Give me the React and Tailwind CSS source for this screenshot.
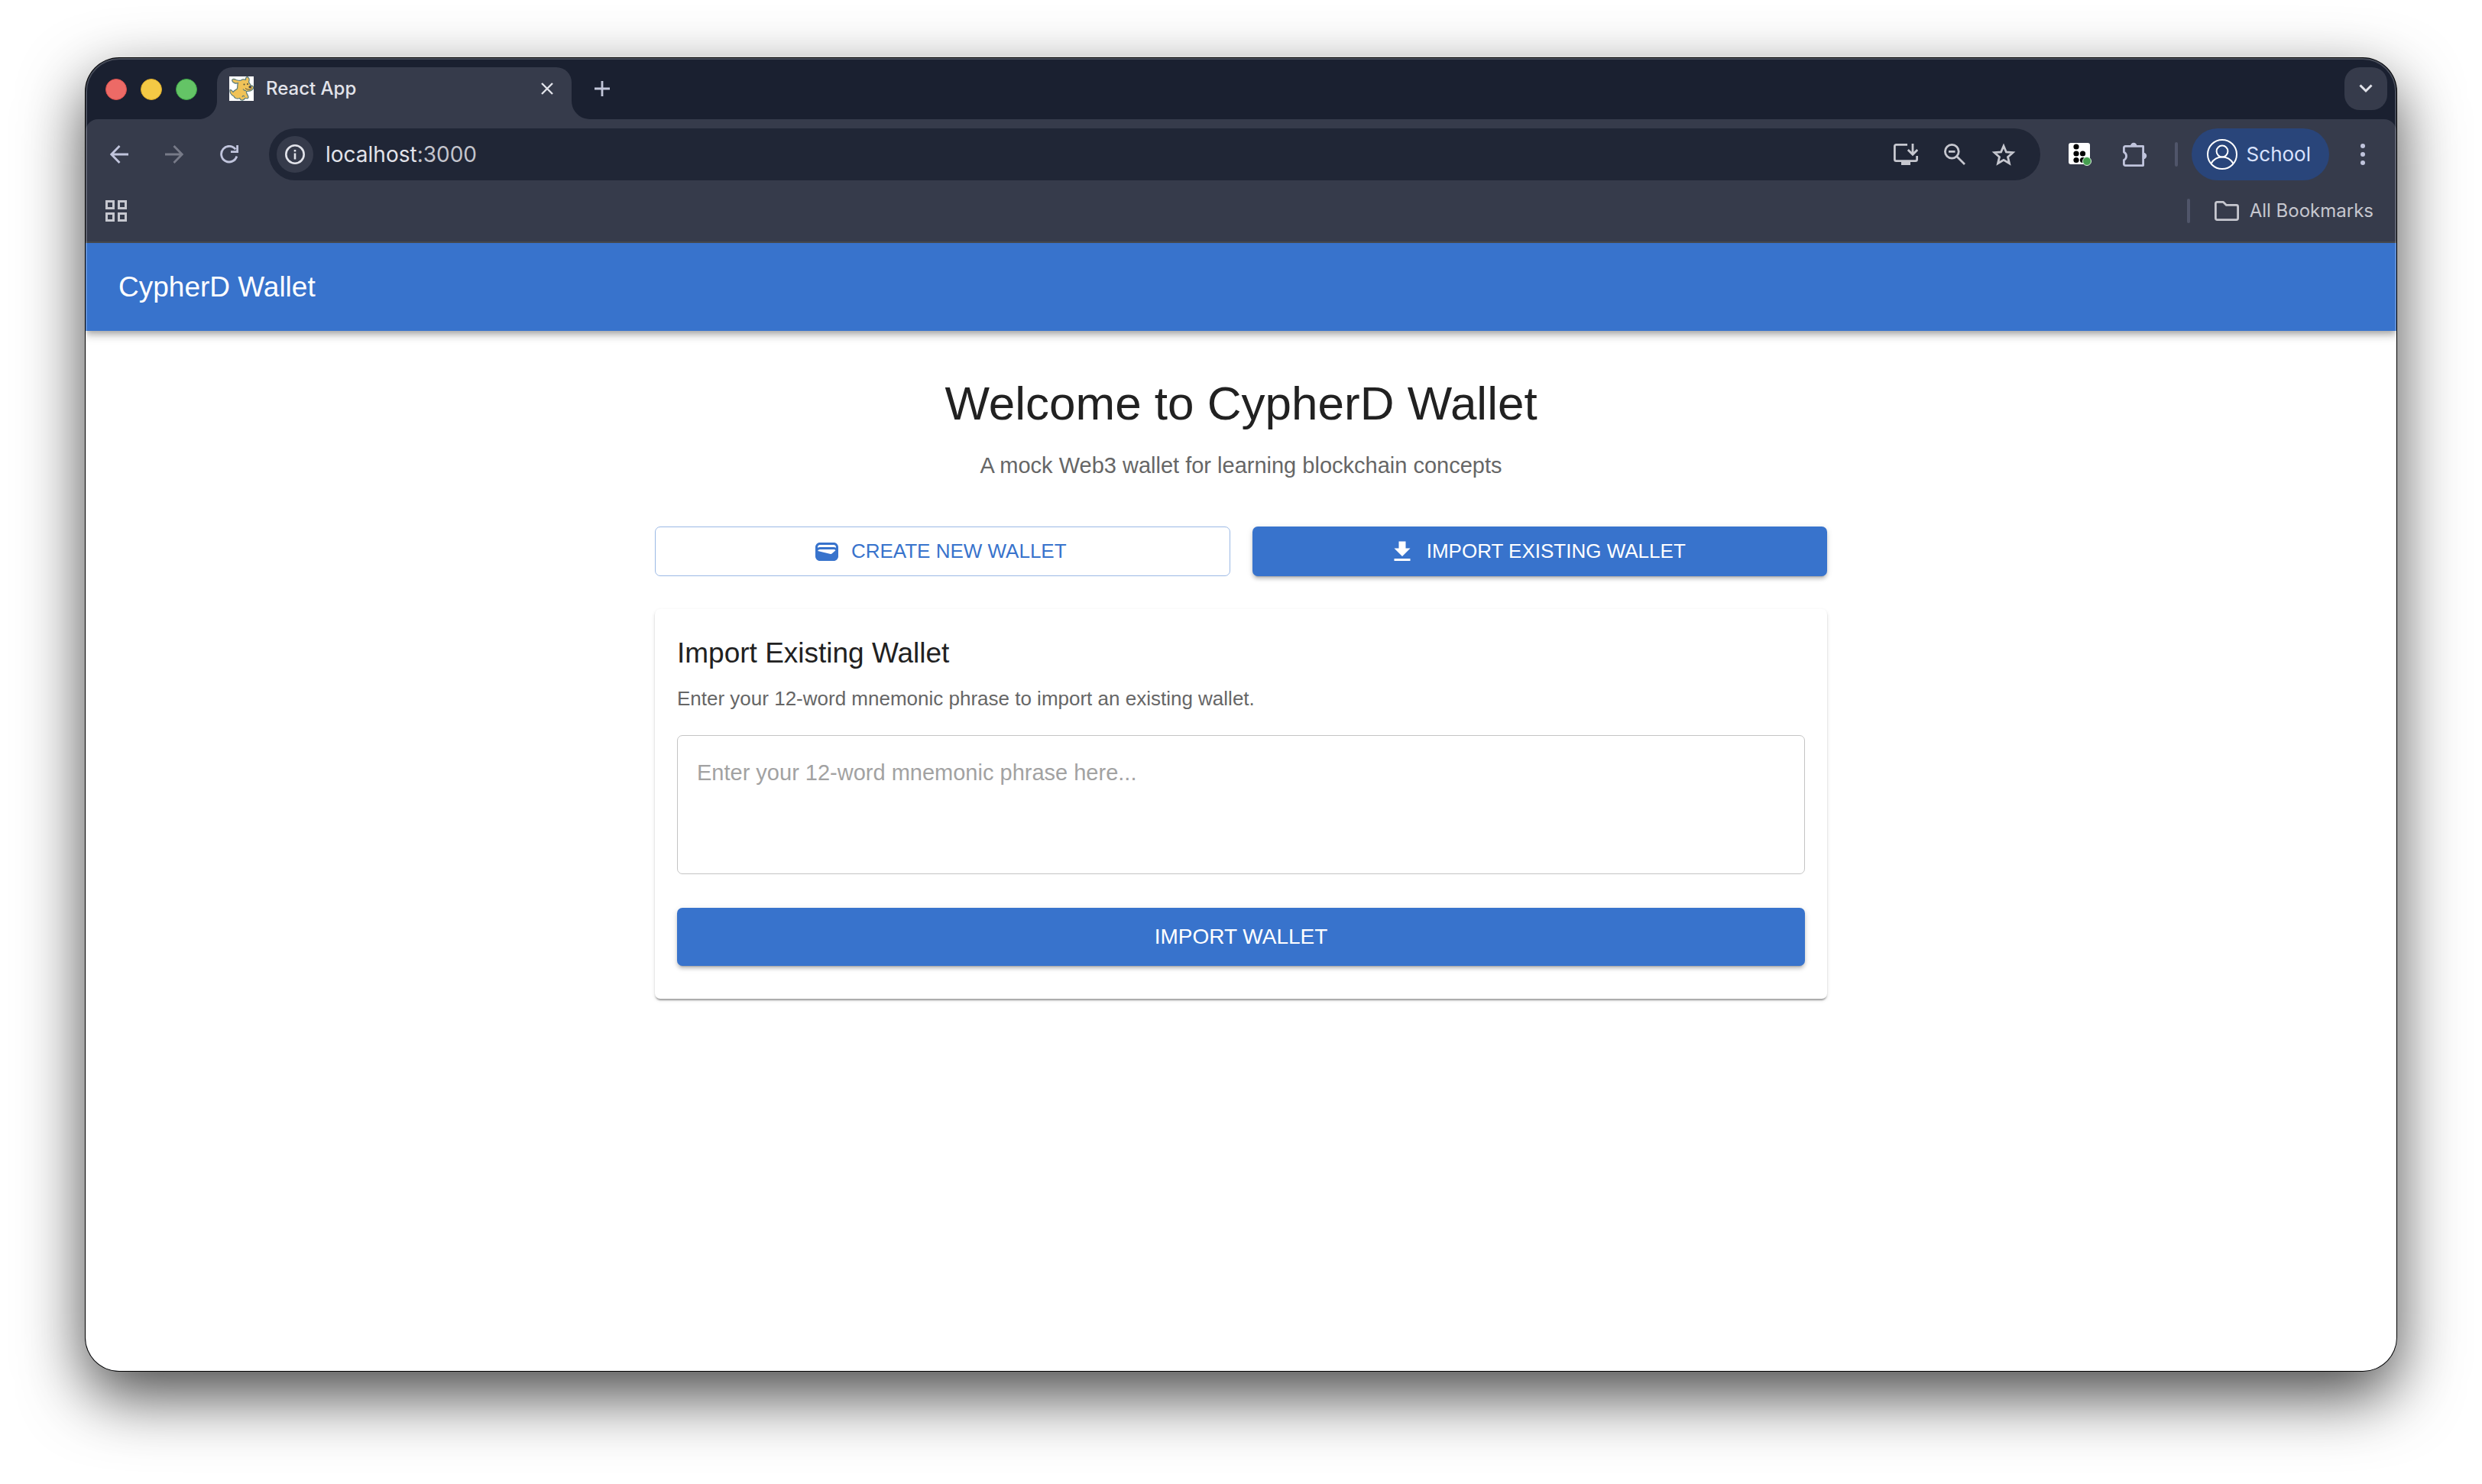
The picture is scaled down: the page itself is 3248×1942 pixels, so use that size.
import React from "react";

const iconButton = "flex size-12 shrink-0 items-center justify-center rounded-full";

function TrafficLights() {
  return (
    <div className="flex h-[58px] items-center gap-[18px]">
      <button aria-label="Close" className="size-7 rounded-full border border-[#d8504d] bg-[#ed6a66]" />
      <button aria-label="Minimize" className="size-7 rounded-full border border-[#d9a92a] bg-[#f4c945]" />
      <button aria-label="Zoom" className="size-7 rounded-full border border-[#3fa648] bg-[#64c466]" />
    </div>
  );
}

function Favicon() {
  return (
    <svg viewBox="0 0 32 32" className="size-8 shrink-0" aria-hidden="true">
      <rect width="32" height="32" fill="#fff" />
      <path
        d="M4 6C3 3 6 3 9 4.500C12 5.500 14 6 15.500 5C18 3 20 4 21.500 4.500C21 1 23.500 0 25 1.500C27 3.500 26 6 25.500 7.500C27 9 27.500 11 28.500 12C32 12 32.500 15.500 30 17.500C27.500 20 24 19 22.500 19.500C22 22 23.500 23 24.500 25.500C26 28.500 23.500 29.500 21.500 28.500C20.500 28 20 30.500 17.500 31C14 31.500 14.500 29 13.500 28.500C10 30 7 28.500 6 26C2.500 24.500 .5 21 1.200 17.500C2.500 17 3.500 19 5 20.500C6 18.500 9 17.500 10.500 16C11 13 10.500 10.500 11.500 8.500C9 9.500 5 9 4 6Z"
        fill="#f0c358"
        stroke="#5f7f7c"
        strokeWidth="1.300"
        strokeLinejoin="round"
      />
      <path d="M22 18.500C20 19 18.500 17.500 18 16.500M17 27C17.500 25 19 25 20 26.500" fill="none" stroke="#5f7f7c" strokeWidth="1.200" />
      <circle cx="19.500" cy="10.500" r="1" fill="#4a4a3a" />
      <circle cx="24" cy="10" r="1" fill="#4a4a3a" />
      <ellipse cx="27.300" cy="13.800" rx="1.900" ry="1.500" fill="#3c3f48" />
      <path d="M21 15.500C24 18 27.500 17.500 29.500 15.500" fill="none" stroke="#55503c" strokeWidth="1" />
    </svg>
  );
}

function Flare({ className }) {
  return (
    <svg viewBox="0 0 24 24" className={className} aria-hidden="true">
      <path d="M24 0V24H0C13.300 24 24 13.300 24 0Z" fill="#363b4b" />
    </svg>
  );
}

function TabStrip() {
  return (
    <div className="flex h-20 items-start gap-[26px] bg-[#1a2030] pt-3 pr-3 pl-[26px]">
      <TrafficLights />
      <div className="relative flex h-[68px] w-[464px] items-start rounded-t-[20px] bg-[#363b4b] px-4 pt-3">
        <Flare className="absolute bottom-0 -left-6 size-6" />
        <Flare className="absolute -right-6 bottom-0 size-6 -scale-x-100" />
        <Favicon />
        <span className="ml-4 flex-1 text-[24px] leading-8 font-medium text-[#e2e3ea]">React App</span>
        <button aria-label="Close tab" className="flex size-8 items-center justify-center">
          <svg viewBox="0 0 16 16" className="size-4" fill="none" stroke="#e2e3ea" strokeWidth="2.400">
            <path d="M1 1L15 15M15 1L1 15" />
          </svg>
        </button>
      </div>
      <button aria-label="New tab" className="-ml-[6px] flex h-14 w-10 items-center justify-center">
        <svg viewBox="0 0 20 20" className="size-5" fill="none" stroke="#c3c7da" strokeWidth="2.800">
          <path d="M10 0V20M0 10H20" />
        </svg>
      </button>
      <button aria-label="Search tabs" className="ml-auto flex size-14 items-center justify-center rounded-[20px] bg-[#363b4b]">
        <svg viewBox="0 0 18 12" className="h-3 w-[18px]" fill="none" stroke="#e2e3ea" strokeWidth="3">
          <path d="M1.500 1.500L9 9L16.500 1.500" />
        </svg>
      </button>
    </div>
  );
}

function Toolbar() {
  return (
    <div className="flex h-[92px] items-center gap-6 pr-5 pl-5">
      <button aria-label="Back" className={iconButton}>
        <svg viewBox="0 0 24 24" className="size-6" fill="none" stroke="#c0c4dc" strokeWidth="2.800">
          <path d="M24 12H2M12.500 1L1.800 12L12.500 23" />
        </svg>
      </button>
      <button aria-label="Forward" className={iconButton}>
        <svg viewBox="0 0 24 24" className="size-6" fill="none" stroke="#777a88" strokeWidth="2.800">
          <path d="M0 12H22M11.500 1L22.200 12L11.500 23" />
        </svg>
      </button>
      <button aria-label="Reload" className={iconButton}>
        <svg viewBox="0 0 24 24" className="size-6" fill="none" stroke="#c0c4dc" strokeWidth="2.800">
          <path d="M21.800 14.500A10.300 10.300 0 1 1 20.200 5.500M22.600 0V8.600H14" />
        </svg>
      </button>
      <div className="ml-1 flex h-[68px] flex-1 items-center gap-4 rounded-full bg-[#202636] pr-6 pl-[10px]">
        <button aria-label="Site information" className="flex size-12 items-center justify-center rounded-full bg-[#363b4b]">
          <svg viewBox="0 0 26 26" className="size-[26px]" fill="none" stroke="#e2e3ea" strokeWidth="2.600">
            <circle cx="13" cy="13" r="11.700" />
            <path d="M13 11.500V19.500M13 7V9.600" />
          </svg>
        </button>
        <div className="flex-1 text-[28px] leading-9">
          <span className="text-[#e2e3ea]">localhost</span>
          <span className="text-[#c3c4cc]">:3000</span>
        </div>
        <button aria-label="Install app" className={iconButton}>
          <svg viewBox="0 0 32 28" className="h-7 w-8" fill="none" stroke="#c6c7cf" strokeWidth="2.800">
            <path d="M18 1.400H3.500Q1.400 1.400 1.400 3.500V20.500Q1.400 22.600 3.500 22.600H28.500Q30.600 22.600 30.600 20.500V16" />
            <path d="M25 0V13M18.800 8L25 14.200L31.200 8" />
            <path d="M10 24H22V28H10Z" fill="#c6c7cf" stroke="none" />
          </svg>
        </button>
        <button aria-label="Zoom out" className={iconButton}>
          <svg viewBox="0 0 28 28" className="size-7" fill="none" stroke="#c6c7cf" strokeWidth="2.800">
            <circle cx="10.300" cy="10.300" r="8.900" />
            <path d="M16.500 16.500L27 27M6 10.300H14.500" />
          </svg>
        </button>
        <button aria-label="Bookmark this tab" className={iconButton}>
          <svg viewBox="0 0 32 30" className="h-[30px] w-8" fill="none" stroke="#c6c7cf" strokeWidth="2.800">
            <path d="M16 4L19.400 12L28 12.700L21.500 18.400L23.500 26.800L16 22.300L8.500 26.800L10.500 18.400L4 12.700L12.600 12Z" />
          </svg>
        </button>
      </div>
      <button aria-label="Extension" className={`${iconButton} ml-1`}>
        <svg viewBox="0 0 30 30" className="size-[30px]">
          <rect width="28" height="28" rx="3" fill="#fff" />
          <circle cx="10" cy="5" r="3.600" />
          <circle cx="10" cy="14" r="3.600" />
          <circle cx="18.500" cy="14" r="3.600" />
          <circle cx="10" cy="22.500" r="3.600" />
          <circle cx="18.500" cy="22.500" r="3.600" />
          <circle cx="24" cy="24" r="5.500" fill="#459f4f" stroke="#d7f0da" strokeWidth="1" />
        </svg>
      </button>
      <button aria-label="Extensions" className={iconButton}>
        <svg viewBox="0 0 32 32" className="size-8">
          <path
            d="M3.400 5.400H26.600V30.600H3.400Q1.400 30.600 1.400 28.600V23.500A6 6 0 0 0 1.400 12.900V7.400Q1.400 5.400 3.400 5.400Z"
            fill="none"
            stroke="#c0c4dc"
            strokeWidth="2.800"
            strokeLinejoin="round"
          />
          <path d="M10 5A4.200 4.200 0 0 1 18.400 5ZM27 13.800A4.200 4.200 0 0 1 27 22.200Z" fill="#c0c4dc" />
        </svg>
      </button>
      <div className="ml-1 h-8 w-1 rounded-full bg-[#50556a]" />
      <button className="-ml-[6px] flex h-[68px] items-center gap-3 rounded-full bg-[#29457a] pr-6 pl-5 text-[26px] leading-8 text-[#d9e2ff]">
        <svg viewBox="0 0 40 40" className="size-10" fill="none" stroke="#fff" strokeWidth="2">
          <circle cx="20" cy="20" r="19" />
          <circle cx="20" cy="16" r="7.400" />
          <path d="M5.500 32C9 26 14 23.500 20 23.500S31 26 34.500 32" />
        </svg>
        School
      </button>
      <button aria-label="Menu" className={`${iconButton} -ml-1`}>
        <svg viewBox="0 0 6 28" className="h-7 w-[6px]" fill="#c0c4dc">
          <circle cx="3" cy="3" r="3" />
          <circle cx="3" cy="14" r="3" />
          <circle cx="3" cy="25" r="3" />
        </svg>
      </button>
    </div>
  );
}

function BookmarksBar() {
  return (
    <div className="flex h-[70px] items-center justify-between border-b-2 border-[#45484e] pr-[30px] pb-3 pl-[26px]">
      <button aria-label="Apps">
        <svg viewBox="0 0 28 28" className="size-7" fill="none" stroke="#c6c7cf" strokeWidth="3">
          <path d="M1.500 1.500H10.500V10.500H1.500ZM17.500 1.500H26.500V10.500H17.500ZM1.500 17.500H10.500V26.500H1.500ZM17.500 17.500H26.500V26.500H17.500Z" />
        </svg>
      </button>
      <div className="flex items-center">
        <div className="mr-8 h-8 w-1 rounded-full bg-[#50556a]" />
        <button className="flex items-center gap-[14px] text-[24px] leading-8 text-[#c6c7cf]">
          <svg viewBox="0 0 32 26" className="h-[26px] w-8" fill="none" stroke="#c6c7cf" strokeWidth="2.800" strokeLinejoin="round">
            <path d="M3.400 1.400H11.500L15.500 5.400H28.600Q30.600 5.400 30.600 7.400V22.600Q30.600 24.600 28.600 24.600H3.400Q1.400 24.600 1.400 22.600V3.400Q1.400 1.400 3.400 1.400Z" />
          </svg>
          All Bookmarks
        </button>
      </div>
    </div>
  );
}

function WalletIcon() {
  return (
    <svg viewBox="0 0 24 24" className="-ml-[7px] size-9" fill="currentColor" aria-hidden="true">
      <path d="M18 4H6C3.790 4 2 5.790 2 8v8c0 2.210 1.790 4 4 4h12c2.210 0 4-1.790 4-4V8c0-2.210-1.790-4-4-4m-1.860 9.770c-.24.2-.57.28-.88.2L4.150 11.250C4.450 10.520 5.160 10 6 10h12c.67 0 1.260.34 1.630.84zM18 6c1.100 0 2 .9 2 2v.55c-.59-.34-1.270-.55-2-.55H6c-.73 0-1.410.21-2 .55V8c0-1.100.9-2 2-2z" />
    </svg>
  );
}

function DownloadIcon() {
  return (
    <svg viewBox="0 0 24 24" className="-ml-[7px] size-9" fill="currentColor" aria-hidden="true">
      <path d="M19 9h-4V3H9v6H5l7 7zM5 18v2h14v-2z" />
    </svg>
  );
}

const raised =
  "bg-[#3873cc] text-white shadow-[0_5px_2px_-4px_rgba(0,0,0,0.2),0_4px_4px_0_rgba(0,0,0,0.14),0_2px_9px_0_rgba(0,0,0,0.12)]";

function WalletPage() {
  return (
    <div className="relative flex-1 overflow-hidden bg-white font-['Liberation_Sans',Arial,sans-serif] text-[#212121]">
      <header className="flex h-[115px] items-center bg-[#3873cc] px-[43px] shadow-[0_4px_7px_-2px_rgba(0,0,0,0.2),0_7px_9px_0_rgba(0,0,0,0.14),0_2px_18px_0_rgba(0,0,0,0.12)]">
        <div className="text-[37px] leading-[58px] text-white">CypherD Wallet</div>
      </header>
      <main className="mx-auto max-w-[1620px] px-[43px] pt-[57px]">
        <h1 className="text-center text-[62px] leading-[76px]">Welcome to CypherD Wallet</h1>
        <p className="mt-[22px] text-center text-[29px] leading-[43px] text-[#666666]">
          A mock Web3 wallet for learning blockchain concepts
        </p>
        <div className="mt-[58px] grid grid-cols-2 gap-[29px]">
          <button className="flex h-[65px] items-center justify-center gap-[14px] rounded-[7px] border border-[#9bb9e5] text-[26px] text-[#3873cc]">
            <WalletIcon />
            CREATE NEW WALLET
          </button>
          <button className={`flex h-[65px] items-center justify-center gap-[14px] rounded-[7px] text-[26px] ${raised}`}>
            <DownloadIcon />
            IMPORT EXISTING WALLET
          </button>
        </div>
        <section className="mt-[43px] rounded-[7px] bg-white px-[29px] pt-[29px] pb-[43px] shadow-[0_4px_2px_-2px_rgba(0,0,0,0.2),0_2px_2px_0_rgba(0,0,0,0.14),0_2px_5px_0_rgba(0,0,0,0.12)]">
          <h2 className="text-[37px] leading-[58px]">Import Existing Wallet</h2>
          <label htmlFor="mnemonic" className="mt-[12px] block text-[26px] leading-[36px] text-[#666666]">
            Enter your 12-word mnemonic phrase to import an existing wallet.
          </label>
          <textarea
            id="mnemonic"
            rows={3}
            placeholder="Enter your 12-word mnemonic phrase here..."
            className="mt-[30px] block w-full resize-none rounded-[7px] border border-[#c4c4c4] px-[25px] pt-[28px] pb-[29px] text-[29px] leading-[41px] placeholder:text-[#a2a2a2]"
          />
          <button className={`mt-11 flex h-[76px] w-full items-center justify-center rounded-[7px] text-[28px] ${raised}`}>
            IMPORT WALLET
          </button>
        </section>
      </main>
    </div>
  );
}

export default function App() {
  return (
    <div className="flex min-h-screen flex-col bg-white px-28 pt-[76px] pb-[148px] font-[Inter,sans-serif]">
      <div className="relative flex flex-1 flex-col overflow-hidden rounded-[44px] bg-[#1a2030] shadow-[0_0_0_1px_#000,0_32px_84px_0_rgba(0,0,0,0.72)]">
        <TabStrip />
        <div className="rounded-t-2xl bg-[#363b4b]">
          <Toolbar />
          <BookmarksBar />
        </div>
        <WalletPage />
        <div className="pointer-events-none absolute inset-0 rounded-[44px] border-2 border-white/20" />
      </div>
    </div>
  );
}
